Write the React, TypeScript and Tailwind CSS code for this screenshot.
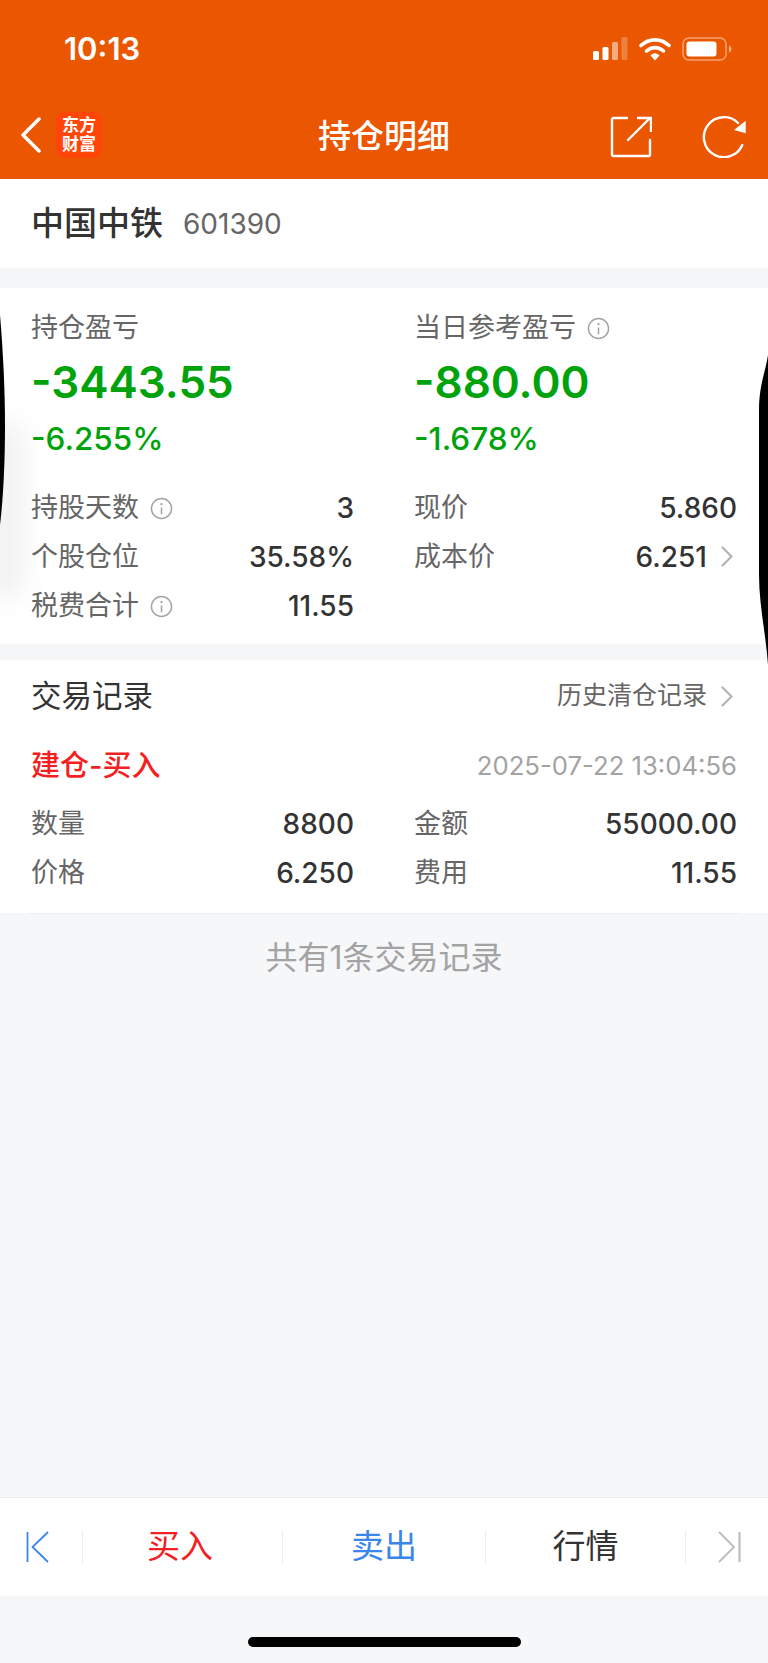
import React from 'react';

const FONT = "font-['Inter','Noto_Sans_CJK_SC',sans-serif]";

const InfoIcon = () => (
  <svg width="23" height="23" viewBox="0 0 24 24" fill="none" className="shrink-0">
    <circle cx="12" cy="12" r="10.500" stroke="#a3a3a3" strokeWidth="1.500" />
    <circle cx="12" cy="7.500" r="1.200" fill="#a3a3a3" />
    <path d="M12 11v7" stroke="#a3a3a3" strokeWidth="1.600" />
  </svg>
);

const Chevron = () => (
  <svg width="12" height="21" viewBox="0 0 12 21" fill="none" className="shrink-0">
    <path d="M1.500 1.500l9 9-9 9" stroke="#b4b4b4" strokeWidth="2.200" strokeLinecap="round" strokeLinejoin="round" />
  </svg>
);

const Row = ({ label, value, info, chevron }: { label: string; value: string; info?: boolean; chevron?: boolean }) => (
  <div className="flex h-[49px] items-center justify-between">
    <div className="flex items-center gap-[11px] pt-[2px] text-[27px] text-[#666666]">
      <span>{label}</span>
      {info && <InfoIcon />}
    </div>
    <div className="flex items-center gap-[14px] text-[28px] font-medium text-[#333333]">
      <span>{value}</span>
      {chevron && (
        <span className="mr-[4px]">
          <Chevron />
        </span>
      )}
    </div>
  </div>
);

const Profit = ({ label, value, pct, info }: { label: string; value: string; pct: string; info?: boolean }) => (
  <div>
    <div className="flex h-[30px] items-center gap-[11px] text-[27px] text-[#666666]">
      <span>{label}</span>
      {info && <InfoIcon />}
    </div>
    <div className="mt-[14px] h-[50px] text-[44px] leading-[50px] font-semibold text-[#00a30b]">{value}</div>
    <div className="mt-[14px] h-[36px] text-[31.5px] leading-[36px] font-medium text-[#00a30b]">{pct}</div>
  </div>
);

export default function App() {
  return (
    <div className={`${FONT} relative flex h-[1663px] w-[768px] flex-col overflow-hidden bg-[#f6f7f9]`}>
      {/* Status bar + nav */}
      <div className="h-[179px] shrink-0 bg-[#eb5600] text-white">
        <div className="flex h-[99px] items-start justify-between pl-[64px] pr-[36px] pt-[31px]">
          <span className="text-[31px] leading-[36px] font-semibold">10:13</span>
          <div className="flex items-center gap-[11px] pt-[6px]">
            <svg width="35" height="24" viewBox="0 0 35 24">
              <rect x="0" y="14" width="6" height="9" rx="1.500" fill="#fff" />
              <rect x="9.500" y="10" width="6" height="13" rx="1.500" fill="#fff" />
              <rect x="19" y="5" width="6" height="18" rx="1.500" fill="#fff" fillOpacity="0.5" />
              <rect x="28.500" y="0" width="6" height="23" rx="1.500" fill="#fff" fillOpacity="0.25" />
            </svg>
            <svg width="32" height="24" viewBox="0 0 32 24" fill="none">
              <path d="M2 8.500C10 1 22 1 30 8.500" stroke="#fff" strokeWidth="3.600" strokeLinecap="round" />
              <path d="M7.500 14C12.500 9.500 19.500 9.500 24.500 14" stroke="#fff" strokeWidth="3.600" strokeLinecap="round" />
              <path d="M11.500 18.500C14.500 15.500 17.500 15.500 20.500 18.500L16 23.500Z" fill="#fff" />
            </svg>
            <svg width="50" height="24" viewBox="0 0 50 24" fill="none">
              <rect x="1" y="1" width="43" height="22" rx="6" stroke="#fff" strokeOpacity="0.45" strokeWidth="1.500" />
              <rect x="4.500" y="4.500" width="30" height="15" rx="3" fill="#fff" />
              <path d="M47 8.500c1.500.5 2.500 2 2.500 3.500s-1 3-2.500 3.500z" fill="#fff" fillOpacity="0.5" />
            </svg>
          </div>
        </div>
        <div className="relative flex h-[80px] items-start justify-between pl-[20px] pr-[22px]">
          <div className="flex items-center gap-[14px] pt-[13px]">
            <svg width="22" height="36" viewBox="0 0 22 36" fill="none">
              <path d="M19 2L3 18l16 16" stroke="#fff" strokeWidth="3.500" strokeLinecap="round" strokeLinejoin="round" />
            </svg>
            <div className="flex h-[46px] w-[46px] items-center justify-center rounded-[9px] bg-[#ff4507] text-center text-[17px] leading-[19px] font-bold">
              <div>
                东方
                <br />
                财富
              </div>
            </div>
          </div>
          <div className="absolute left-0 right-0 top-[17px] text-center text-[33px] leading-[40px] font-medium">持仓明细</div>
          <div className="flex items-center gap-[50px] pt-[17px]">
            <svg width="42" height="42" viewBox="0 0 42 42" fill="none">
              <path d="M17 2H3a2 2 0 0 0-1 1v36a2 2 0 0 0 1 1h36a2 2 0 0 0 1-1V24" stroke="#fff" strokeWidth="2.400" strokeLinecap="round" />
              <path d="M18 24L39 3" stroke="#fff" strokeWidth="2.400" strokeLinecap="round" />
              <path d="M27 2h14v14" stroke="#fff" strokeWidth="2.400" />
            </svg>
            <svg width="44" height="42" viewBox="0 0 44 42" fill="none">
              <path d="M40.300 29A20 20 0 1 1 36 7" stroke="#fff" strokeWidth="2.400" strokeLinecap="round" />
              <path d="M43.700 4.700V17.300L32 14z" fill="#fff" />
            </svg>
          </div>
        </div>
      </div>

      {/* Stock name */}
      <div className="flex h-[89px] shrink-0 items-center gap-[20px] bg-white pl-[31px]">
        <span className="text-[33px] font-medium text-[#333333]">中国中铁</span>
        <span className="text-[28px] text-[#666666]">601390</span>
      </div>

      {/* Position summary */}
      <div className="mt-[20px] h-[356px] shrink-0 bg-white pl-[31px] pr-[31px] pt-[25px]">
        <div className="grid grid-cols-[323px_323px] gap-x-[60px]">
          <Profit label="持仓盈亏" value="-3443.55" pct="-6.255%" />
          <Profit label="当日参考盈亏" value="-880.00" pct="-1.678%" info />
        </div>
        <div className="mt-[26px] grid grid-cols-[323px_323px] gap-x-[60px]">
          <div>
            <Row label="持股天数" value="3" info />
            <Row label="个股仓位" value="35.58%" />
            <Row label="税费合计" value="11.55" info />
          </div>
          <div>
            <Row label="现价" value="5.860" />
            <Row label="成本价" value="6.251" chevron />
          </div>
        </div>
      </div>

      {/* Trade records */}
      <div className="mt-[16px] h-[253px] shrink-0 bg-white">
        <div className="flex h-[72px] items-center justify-between pl-[31px] pr-[35px]">
          <span className="text-[30.500px] text-[#333333]">交易记录</span>
          <div className="flex items-center gap-[14px] text-[25px] text-[#666666]">
            <span>历史清仓记录</span>
            <Chevron />
          </div>
        </div>
        <div className="flex h-[56px] items-center justify-between pl-[31px] pr-[31px] pt-[12px]">
          <span className="text-[29px] font-medium text-[#f41f23]">建仓-买入</span>
          <span className="text-[25.700px] text-[#a3a3a3]">2025-07-22 13:04:56</span>
        </div>
        <div className="grid grid-cols-[323px_323px] gap-x-[60px] pl-[31px] pt-[11px]">
          <div>
            <Row label="数量" value="8800" />
            <Row label="价格" value="6.250" />
          </div>
          <div>
            <Row label="金额" value="55000.00" />
            <Row label="费用" value="11.55" />
          </div>
        </div>
      </div>
      <div className="mx-[29px] h-px shrink-0 bg-[#eeeeee]" />

      <div className="flex h-[88px] shrink-0 items-center justify-center text-[32px] text-[#a3a3a3]">共有1条交易记录</div>

      {/* Bottom trade bar */}
      <div className="mt-[495px] flex h-[99px] shrink-0 items-center border-t border-[#eeeeee] bg-white">
        <div className="flex w-[83px] justify-center border-r border-[#eeeeee]">
          <div className="flex h-[34px] items-center pr-[7px]">
            <svg width="23" height="32" viewBox="0 0 23 32" fill="none">
              <path d="M1.500 1v30M22 1L6.500 16 22 31" stroke="#3b86ee" strokeWidth="1.800" />
            </svg>
          </div>
        </div>
        <div className="flex h-[34px] w-[200px] items-center justify-center border-r border-[#eeeeee] pr-[5px] text-[33px] text-[#f41f23]">买入</div>
        <div className="flex h-[34px] w-[203px] items-center justify-center border-r border-[#eeeeee] text-[33px] text-[#3b86ee]">卖出</div>
        <div className="flex h-[34px] w-[200px] items-center justify-center border-r border-[#eeeeee] text-[33px] text-[#333333]">行情</div>
        <div className="flex flex-1 items-center justify-center pl-[4px]">
          <svg width="23" height="32" viewBox="0 0 23 32" fill="none">
            <path d="M21.500 1v30" stroke="#bdbdbd" strokeWidth="2.200" />
            <path d="M1 1l15 15L1 31" stroke="#bdbdbd" strokeWidth="1.800" />
          </svg>
        </div>
      </div>

      {/* Home indicator */}
      <div className="flex flex-1 justify-center pt-[41px]">
        <div className="h-[10px] w-[273px] rounded-full bg-black" />
      </div>

      {/* Black edge shapes lying over the page */}
      <div className="pointer-events-none absolute left-[-20px] top-[420px] h-[180px] w-[45px] rounded-full bg-black/5 blur-[12px]" />
      <svg className="pointer-events-none absolute left-0 top-[300px]" width="8" height="240" viewBox="0 0 8 240">
        <path d="M0 15C3 50 5 90 5 125C5 165 3 200 0 225Z" fill="#000" />
      </svg>
      <svg className="pointer-events-none absolute right-0 top-[350px]" width="12" height="320" viewBox="0 0 12 320">
        <path d="M12 5C10 20 3 35 3 60V225C3 255 10 285 12 315Z" fill="#000" />
      </svg>
    </div>
  );
}
